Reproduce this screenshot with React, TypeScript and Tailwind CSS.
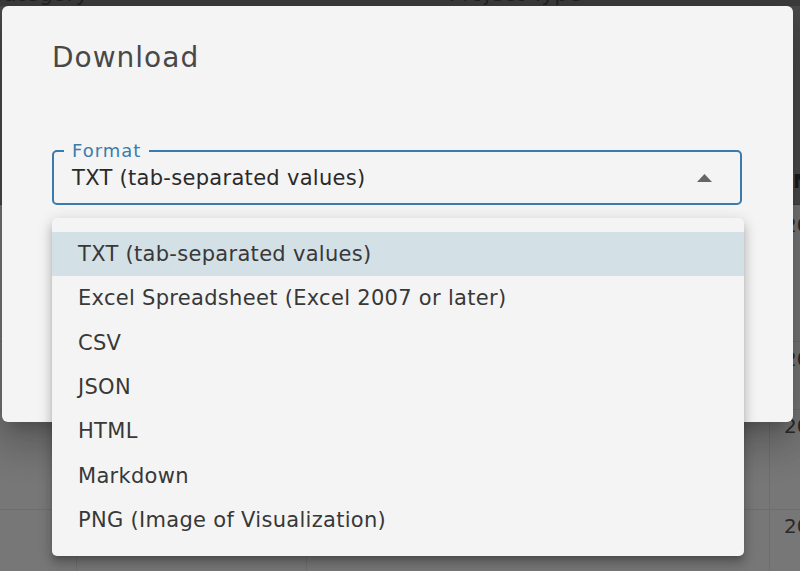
import { useState } from 'react';

// Export formats offered in the download dialog
const FORMATS = [
  'TXT (tab-separated values)',
  'Excel Spreadsheet (Excel 2007 or later)',
  'CSV',
  'JSON',
  'HTML',
  'Markdown',
  'PNG (Image of Visualization)',
];

// Rows of the table behind the dialog (only the right edge peeks out)
const BODY_ROWS = [
  { h: 'h-[137px]', pt: 'pt-[5px]' },
  { h: 'h-[68px]', pt: 'pt-[2px]' },
  { h: 'h-[100px]', pt: 'pt-[1px]' },
  { h: 'h-[70px]', pt: 'pt-[1px]' },
];

function Backdrop() {
  return (
    <div className="flex flex-col">
      {/* header bar, mostly hidden above the viewport */}
      <div className="h-[6px] overflow-hidden bg-[#3c3c3c]">
        <div className="-mt-[18px] flex text-[22px] leading-[24px] text-[#232323]">
          <span className="-ml-[12px] w-[461px] shrink-0">Category</span>
          <span className="shrink-0">Project Type</span>
        </div>
      </div>

      {/* table header */}
      <div className="flex h-[199px] bg-[#4a4a4a] border-b border-[#3e3e3e]">
        <div className="w-[771px] shrink-0" />
        <div className="flex min-w-0 flex-1 items-end overflow-hidden pb-[8px] pl-[22px] text-[20px] font-bold text-[#1c1c1c]">
          Month
        </div>
      </div>

      {/* table body */}
      {BODY_ROWS.map((row, i) => (
        <div key={i} className={`flex ${row.h} bg-[#777777] border-b border-[#6e6e6e]`}>
          <div className="w-[77px] shrink-0 border-r border-[#6e6e6e]" />
          <div className="w-[230px] shrink-0 border-r border-[#6e6e6e]" />
          <div className="w-[463px] shrink-0 border-r border-[#6e6e6e]" />
          <div className={`min-w-0 flex-1 overflow-hidden whitespace-nowrap pl-[14px] ${row.pt} text-[20px] text-[#2a2a2a]`}>2021</div>
        </div>
      ))}
    </div>
  );
}

export default function App() {
  const [selected] = useState(0);

  return (
    <div className="relative h-[571px] w-[800px] overflow-hidden bg-[#777777] font-['DejaVu_Sans',sans-serif]">
      <Backdrop />

      {/* dialog */}
      <div className="absolute left-[2px] top-[6px] h-[416px] w-[791px] rounded-[6px] bg-[#f4f4f4] px-[50px] pt-[38px] shadow-[0_11px_15px_-7px_rgba(0,0,0,0.2),0_24px_38px_3px_rgba(0,0,0,0.14),0_9px_46px_8px_rgba(0,0,0,0.12)]">
        <h2 className="h-[28px] text-[28px] leading-[28px] tracking-[1px] text-[#484848]">Download</h2>

        <div className="relative mt-[78px] flex h-[55px] w-[690px] items-center justify-between rounded-[5px] border-2 border-[#3b7aad] pl-[18px] pr-[28px]">
          <span className="absolute -top-[10px] left-[10px] bg-[#f4f4f4] px-[8px] text-[18px] leading-[18px] tracking-[1px] text-[#3b7cad]">
            Format
          </span>
          <span className="text-[21px] leading-[24px] tracking-[0.3px] text-[#2a2a2a]">{FORMATS[selected]}</span>
          <svg width="15" height="8" viewBox="0 0 15 8" className="fill-[#666666]">
            <path d="M0 8 L7.5 0 L15 8 Z" />
          </svg>
        </div>
      </div>

      {/* open select menu */}
      <ul className="absolute left-[52px] top-[218px] w-[692px] rounded-[5px] bg-[#f4f4f4] py-[14px] shadow-[0_5px_5px_-3px_rgba(0,0,0,0.2),0_8px_10px_1px_rgba(0,0,0,0.14),0_3px_14px_2px_rgba(0,0,0,0.12)]">
        {FORMATS.map((f, i) => (
          <li
            key={f}
            className={`flex h-[44.3px] items-center pl-[26px] text-[21px] leading-[24px] tracking-[0.3px] text-[#383838] ${
              i === selected ? 'bg-[#d3e0e6]' : ''
            }`}
          >
            {f}
          </li>
        ))}
      </ul>
    </div>
  );
}
